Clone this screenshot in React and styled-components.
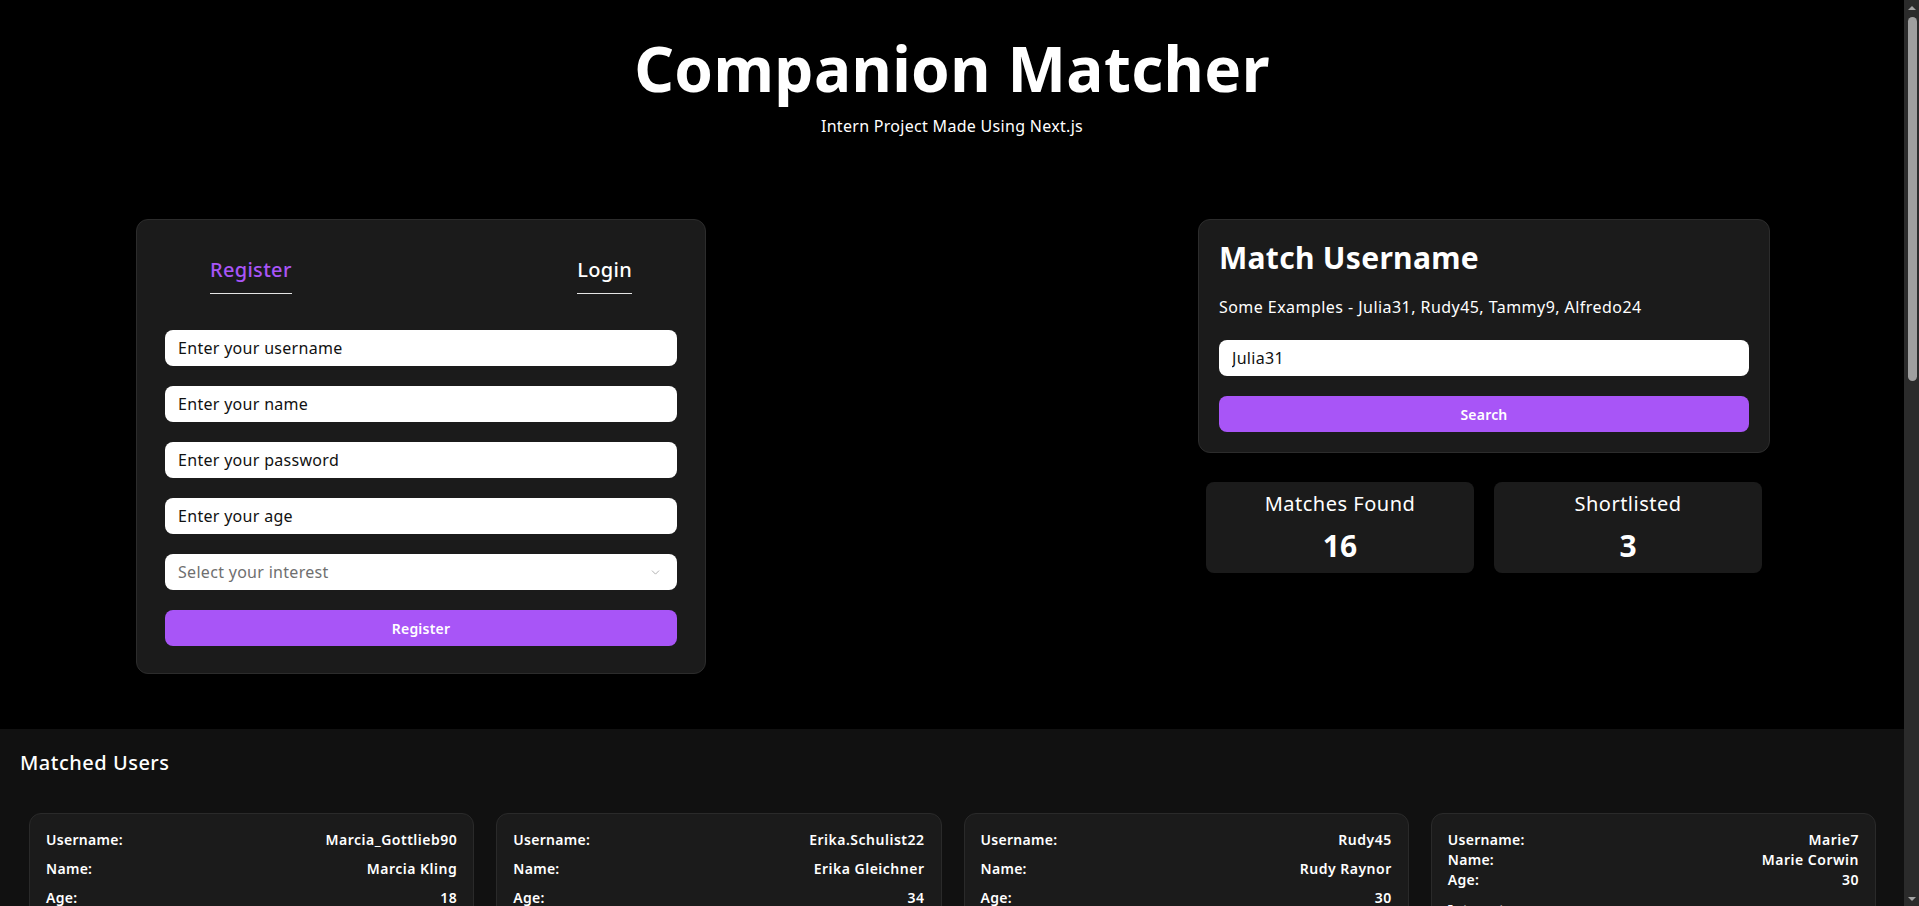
import React, { useState } from "react";
import styled, { createGlobalStyle } from "styled-components";
import { ChevronDown } from "lucide-react";

const GlobalStyle = createGlobalStyle`
  body {
    margin: 0;
    background: #000;
    color: #fff;
    font-family: "Noto Sans", "Open Sans", sans-serif;
  }
  * {
    box-sizing: border-box;
  }
`;

const Frame = styled.div`
  display: flex;
  height: 100vh;
  overflow: hidden;
`;

const Page = styled.div`
  flex: 1;
  min-width: 0;
  overflow-y: auto;
  scrollbar-width: none;
  background: #000;
`;

const ScrollTrack = styled.div`
  width: 15px;
  flex-shrink: 0;
  background: #2b2b2b;
  display: flex;
  flex-direction: column;
  align-items: center;
`;

const ScrollArrow = styled.div`
  height: 15px;
  display: flex;
  align-items: center;
  justify-content: center;

  &::before {
    content: "";
    border-left: 4px solid transparent;
    border-right: 4px solid transparent;
    border-${(p) => (p.$down ? "top" : "bottom")}: 4px solid #a3a3a3;
  }
`;

const ScrollThumb = styled.div`
  width: 9px;
  height: 364px;
  margin: 2px 0 0 1px;
  border-radius: 5px;
  background: #9f9f9f;
`;

const ScrollRest = styled.div`
  flex: 1;
`;

const Header = styled.header`
  display: flex;
  flex-direction: column;
  align-items: center;
  padding-top: 37px;
`;

const Title = styled.h1`
  margin: 0;
  font-size: 62px;
  line-height: 62px;
  font-weight: 700;
  letter-spacing: 0.4px;
`;

const Subtitle = styled.p`
  margin: 15px 0 0;
  font-size: 16px;
  line-height: 24px;
  letter-spacing: 0.3px;
`;

const Main = styled.main`
  display: flex;
  justify-content: space-between;
  align-items: flex-start;
  padding: 0 134px 0 136px;
  margin-top: 81px;
`;

const Card = styled.div`
  background: #1b1b1b;
  border: 1px solid #2c2c2c;
  border-radius: 12px;
  width: ${(p) => p.$width}px;
  padding: ${(p) => p.$pad};
`;

const Tabs = styled.div`
  display: flex;
  justify-content: space-between;
  padding: 0 45px;
  margin-top: 8px;
`;

const Tab = styled.button`
  background: none;
  border: none;
  border-bottom: 1px solid #e5e5e5;
  padding: 0 0 9px;
  font-family: inherit;
  font-size: 20px;
  line-height: 28px;
  font-weight: 500;
  letter-spacing: 0.3px;
  color: ${(p) => (p.$active ? "#a855f7" : "#fff")};
  cursor: pointer;
`;

const Form = styled.form`
  display: flex;
  flex-direction: column;
  gap: 20px;
  margin-top: ${(p) => p.$top}px;
`;

const Input = styled.input`
  height: 36px;
  width: 100%;
  border: none;
  border-radius: 8px;
  background: #fff;
  padding: 0 13px;
  font-family: inherit;
  font-size: 16px;
  letter-spacing: 0.3px;
  color: #111;
  outline: none;

  &::placeholder {
    color: #111;
  }
`;

const SelectWrap = styled.div`
  position: relative;
  height: 36px;
`;

const Select = styled.select`
  appearance: none;
  height: 36px;
  width: 100%;
  border: none;
  border-radius: 8px;
  background: #fff;
  padding: 0 13px;
  font-family: inherit;
  font-size: 16px;
  letter-spacing: 0.3px;
  color: #6f6f6f;
  outline: none;
  color-scheme: light;
`;

const Chevron = styled(ChevronDown)`
  position: absolute;
  right: 15px;
  top: 12px;
  color: #a0a0a0;
  pointer-events: none;
`;

const Button = styled.button`
  height: 36px;
  width: 100%;
  border: none;
  border-radius: 8px;
  background: #a855f7;
  color: #fff;
  font-family: inherit;
  font-size: 14px;
  font-weight: 600;
  letter-spacing: 0.2px;
  cursor: pointer;
`;

const RightColumn = styled.div`
  display: flex;
  flex-direction: column;
  align-items: center;
`;

const CardTitle = styled.h2`
  margin: 0;
  font-size: 30px;
  line-height: 36px;
  font-weight: 700;
  letter-spacing: 0.3px;
`;

const Examples = styled.p`
  margin: 19px 0 0;
  font-size: 16px;
  line-height: 24px;
  letter-spacing: 0.45px;
`;

const Stats = styled.div`
  display: grid;
  grid-template-columns: 1fr 1fr;
  gap: 20px;
  width: 556px;
  margin-top: 29px;
`;

const StatBox = styled.div`
  background: #1b1b1b;
  border-radius: 8px;
  height: 91px;
  display: flex;
  flex-direction: column;
  align-items: center;
  padding-top: 8px;
`;

const StatLabel = styled.div`
  font-size: 20px;
  line-height: 28px;
  letter-spacing: 0.5px;
`;

const StatValue = styled.div`
  font-size: 30px;
  line-height: 36px;
  font-weight: 700;
  margin-top: 10px;
`;

const Section = styled.section`
  background: #111;
  margin-top: 55px;
  padding: 20px 20px 40px;
`;

const SectionTitle = styled.h3`
  margin: 0;
  font-size: 20px;
  line-height: 28px;
  font-weight: 500;
  letter-spacing: 0.5px;
`;

const Grid = styled.div`
  display: grid;
  grid-template-columns: repeat(4, 1fr);
  gap: 22px;
  padding: 0 8px 0 9px;
  margin-top: 36px;
`;

const UserCard = styled.div`
  background: #1b1b1b;
  border: 1px solid #2a2a2a;
  border-radius: 12px;
  padding: 16px 16px 16px;
  display: flex;
  flex-direction: column;
  gap: ${(p) => (p.$compact ? 0 : 9)}px;
`;

const Row = styled.div`
  display: flex;
  justify-content: space-between;
  font-size: 14px;
  line-height: 20px;
  font-weight: 600;
  letter-spacing: 0.3px;
`;

const Value = styled.span`
  letter-spacing: 0.5px;
`;

const Interests = styled.div`
  margin-top: ${(p) => (p.$compact ? 10 : 0)}px;
  font-size: 14px;
  line-height: 20px;
  font-weight: 600;
  letter-spacing: 0.3px;
`;

const Chips = styled.div`
  display: flex;
  flex-wrap: wrap;
  gap: 6px;
  margin-top: 8px;
`;

const Chip = styled.span`
  background: #2a2a2a;
  color: #ddd;
  border-radius: 6px;
  padding: 2px 8px;
  font-size: 12px;
  font-weight: 500;
`;

const ShortlistButton = styled(Button)`
  margin-top: 12px;
  height: 32px;
  font-size: 13px;
`;

const users = [
  { username: "Marcia_Gottlieb90", name: "Marcia Kling", age: 18, interests: ["Music", "Travel"] },
  { username: "Erika.Schulist22", name: "Erika Gleichner", age: 34, interests: ["Reading", "Music"] },
  { username: "Rudy45", name: "Rudy Raynor", age: 30, interests: ["Sports", "Travel"] },
  { username: "Marie7", name: "Marie Corwin", age: 30, interests: ["Music", "Art", "Travel", "Cooking"], compact: true },
  { username: "Alfredo24", name: "Alfredo Hansen", age: 24, interests: ["Travel", "Gaming"] },
  { username: "Tammy9", name: "Tammy Bogan", age: 27, interests: ["Music", "Dance"] },
  { username: "Kelly_Runte", name: "Kelly Runte", age: 29, interests: ["Reading", "Art"] },
  { username: "Owen.Lind61", name: "Owen Lind", age: 33, interests: ["Travel", "Photography"] },
  { username: "Dora_Wiza", name: "Dora Wiza", age: 22, interests: ["Music", "Movies"] },
  { username: "Ellis83", name: "Ellis Marvin", age: 31, interests: ["Hiking", "Travel"] },
  { username: "Joanne.Fay", name: "Joanne Fay", age: 26, interests: ["Art", "Music"] },
  { username: "Lowell_Ward5", name: "Lowell Ward", age: 35, interests: ["Cooking", "Travel"] },
  { username: "Sheri14", name: "Sheri Mraz", age: 28, interests: ["Reading", "Music"] },
  { username: "Gene.Koss", name: "Gene Koss", age: 32, interests: ["Sports", "Movies"] },
  { username: "Vera_Huel3", name: "Vera Huel", age: 25, interests: ["Travel", "Dance"] },
  { username: "Nina88", name: "Nina Carter", age: 30, interests: ["Music", "Yoga"] },
];

const App = () => {
  const [tab, setTab] = useState("register");

  return (
    <Frame>
      <GlobalStyle />
      <Page>
        <Header>
          <Title>Companion Matcher</Title>
          <Subtitle>Intern Project Made Using Next.js</Subtitle>
        </Header>

        <Main>
          <Card $width={570} $pad="28px 28px 27px">
            <Tabs>
              <Tab $active={tab === "register"} onClick={() => setTab("register")}>
                Register
              </Tab>
              <Tab $active={tab === "login"} onClick={() => setTab("login")}>
                Login
              </Tab>
            </Tabs>
            <Form $top={36} onSubmit={(e) => e.preventDefault()}>
              <Input placeholder="Enter your username" />
              <Input placeholder="Enter your name" />
              <Input type="password" placeholder="Enter your password" />
              <Input placeholder="Enter your age" />
              <SelectWrap>
                <Select defaultValue="">
                  <option value="" disabled>
                    Select your interest
                  </option>
                  <option>Music</option>
                  <option>Travel</option>
                  <option>Reading</option>
                </Select>
                <Chevron size={13} strokeWidth={1.5} />
              </SelectWrap>
              <Button type="submit">Register</Button>
            </Form>
          </Card>

          <RightColumn>
            <Card $width={572} $pad="20px">
              <CardTitle>Match Username</CardTitle>
              <Examples>Some Examples - Julia31, Rudy45, Tammy9, Alfredo24</Examples>
              <Form $top={21} onSubmit={(e) => e.preventDefault()}>
                <Input defaultValue="Julia31" />
                <Button type="submit">Search</Button>
              </Form>
            </Card>
            <Stats>
              <StatBox>
                <StatLabel>Matches Found</StatLabel>
                <StatValue>16</StatValue>
              </StatBox>
              <StatBox>
                <StatLabel>Shortlisted</StatLabel>
                <StatValue>3</StatValue>
              </StatBox>
            </Stats>
          </RightColumn>
        </Main>

        <Section>
          <SectionTitle>Matched Users</SectionTitle>
          <Grid>
            {users.map((u) => (
              <UserCard key={u.username} $compact={u.compact}>
                <Row>
                  <span>Username:</span>
                  <Value>{u.username}</Value>
                </Row>
                <Row>
                  <span>Name:</span>
                  <Value>{u.name}</Value>
                </Row>
                <Row>
                  <span>Age:</span>
                  <Value>{u.age}</Value>
                </Row>
                <Interests $compact={u.compact}>
                  Interests:
                  <Chips>
                    {u.interests.map((i) => (
                      <Chip key={i}>{i}</Chip>
                    ))}
                  </Chips>
                </Interests>
                <ShortlistButton>Shortlist</ShortlistButton>
              </UserCard>
            ))}
          </Grid>
        </Section>
      </Page>

      <ScrollTrack>
        <ScrollArrow />
        <ScrollThumb />
        <ScrollRest />
        <ScrollArrow $down />
      </ScrollTrack>
    </Frame>
  );
};

export default App;
